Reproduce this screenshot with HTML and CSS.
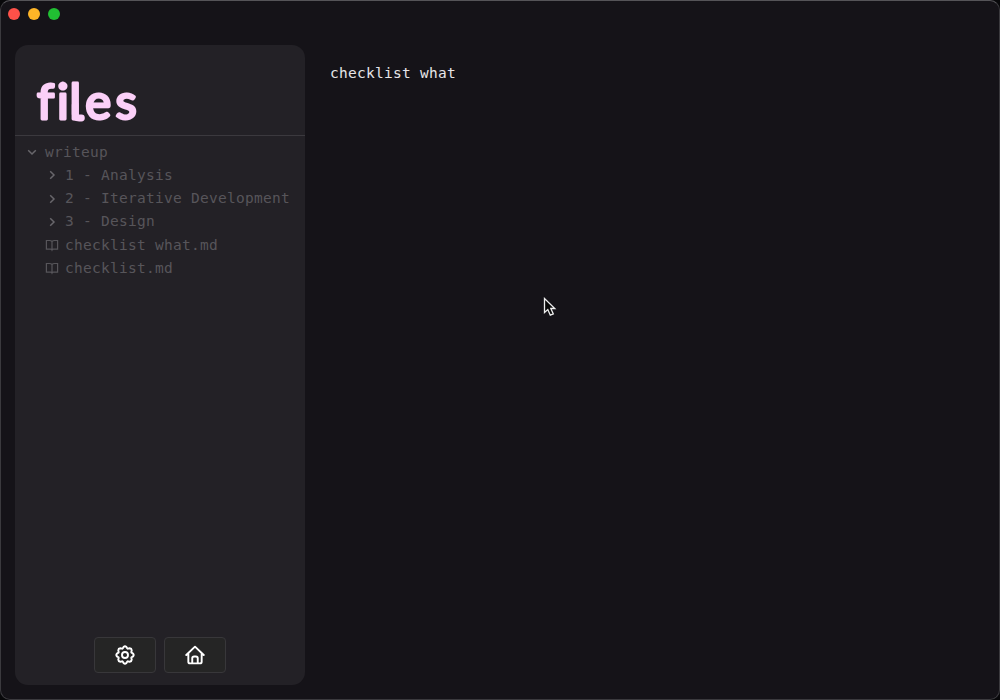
FILE: index.html
```html
<!DOCTYPE html>
<html lang="en">
<head>
<meta charset="utf-8">
<title>files</title>
<link rel="stylesheet" href="styles.css">
</head>
<body>
<div class="window">
  <header class="titlebar"><span class="dot red"></span><span class="dot yellow"></span><span class="dot green"></span></header>
  <div class="layout">
    <aside class="sidebar">
      <h1 class="title"><svg class="wordmark" viewBox="0 0 290 90"><text y="74.400" x="22 42.100 54.400 70.200 100.500">files</text><path class="tail" d="M60.200 60v9q0 4 4 4h2.200"/></svg></h1>
      <ul class="tree">
        <li class="row root"><svg class="icon" viewBox="0 0 14 14"><path d="M3.2 5.2 7 9l3.8-3.8"/></svg><span class="name">writeup</span></li>
        <li class="row"><svg class="icon" viewBox="0 0 14 14"><path d="M5.2 3.2 9 7l-3.800 3.800"/></svg><span class="name">1 - Analysis</span></li>
        <li class="row"><svg class="icon" viewBox="0 0 14 14"><path d="M5.2 3.2 9 7l-3.800 3.800"/></svg><span class="name">2 - Iterative Development</span></li>
        <li class="row"><svg class="icon" viewBox="0 0 14 14"><path d="M5.2 3.2 9 7l-3.800 3.800"/></svg><span class="name">3 - Design</span></li>
        <li class="row"><svg class="icon book" viewBox="0 0 14 14"><path d="M7 3.500Q6 2.500 4.500 2.500H1.400v8.700h4.200Q6.700 11.200 7 12q.3-.8 1.400-.8h4.200V2.500H9.500Q8 2.500 7 3.500V12"/></svg><span class="name">checklist what.md</span></li>
        <li class="row"><svg class="icon book" viewBox="0 0 14 14"><path d="M7 3.500Q6 2.500 4.500 2.500H1.400v8.700h4.200Q6.700 11.200 7 12q.3-.8 1.400-.8h4.200V2.500H9.500Q8 2.500 7 3.500V12"/></svg><span class="name">checklist.md</span></li>
      </ul>
      <div class="actions">
        <button class="button" aria-label="Settings"><svg viewBox="0 0 24 24"><circle cx="12" cy="12" r="3.600"/><path d="M10.300 2.300Q12 .9 13.700 2.300L14.800 4.100Q15.100 4.500 15.600 4.400L17.600 3.900Q19.900 4.100 20.100 6.400L19.600 8.400Q19.500 8.900 19.900 9.200L21.700 10.300Q23.100 12 21.700 13.700L19.900 14.800Q19.500 15.100 19.600 15.600L20.100 17.600Q19.900 19.900 17.600 20.100L15.600 19.600Q15.100 19.500 14.800 19.900L13.700 21.700Q12 23.100 10.300 21.700L9.200 19.900Q8.900 19.500 8.400 19.600L6.400 20.100Q4.100 19.900 3.900 17.600L4.400 15.600Q4.500 15.100 4.100 14.800L2.300 13.700Q.9 12 2.300 10.300L4.100 9.200Q4.500 8.900 4.400 8.400L3.900 6.400Q4.100 4.100 6.400 3.900L8.400 4.400Q8.900 4.500 9.200 4.100Z"/></svg></button>
        <button class="button" aria-label="Home"><svg viewBox="0 0 24 24"><path d="M1.500 12 12 2l10.500 10M4 10v10q0 2 2 2h12q2 0 2-2V10M8.700 22v-6q0-2.300 2.300-2.300h2q2.300 0 2.300 2.300v6"/></svg></button>
      </div>
    </aside>
    <main class="editor">checklist what</main>
  </div>
  <svg class="cursor" viewBox="0 0 14 20"><path d="M1.500 1.500v14l3.300-3 2.500 5.700 3-1.300-2.500-5.400h4z"/></svg>
</div>
</body>
</html>
```
FILE: styles.css
```css
* { box-sizing: border-box; }
body { margin: 0; background: #08080a; }
.window {
  position: relative;
  width: 1000px;
  height: 700px;
  border: 1px solid #3b3a3e;
  border-top-color: #555458;
  border-radius: 10px;
  background: #151318;
  overflow: hidden;
  font-family: "DejaVu Sans Mono", monospace;
  font-size: 14.500px;
  letter-spacing: 0.270px;
}
.titlebar { display: flex; gap: 8px; height: 44px; padding: 7px 7px 0; }
.dot { width: 12px; height: 12px; border-radius: 50%; }
.red { background: #ff5149; }
.yellow { background: #ffb527; }
.green { background: #21c033; }
.layout { display: flex; padding-left: 14px; }
.sidebar {
  display: flex;
  flex-direction: column;
  width: 290px;
  height: 640px;
  border-radius: 13px;
  background: #232126;
}
.title { height: 91px; margin: 0; border-bottom: 1px solid #3b393e; }
.wordmark {
  display: block;
  width: 290px;
  height: 90px;
  fill: #fbd0f8;
  stroke: #fbd0f8;
  stroke-width: 2.900;
  stroke-linejoin: round;
  stroke-linecap: round;
  font: 400 49px Lato, sans-serif;
  letter-spacing: 0;
}
.tail { fill: none; stroke-width: 6.800; }
.tree { list-style: none; margin: 0; padding: 5px 0 0; color: #57555a; }
.row { display: flex; align-items: center; gap: 6px; height: 23.250px; padding-left: 30px; white-space: pre; }
.root { padding-left: 10px; }
.name { padding-bottom: 2px; }
.icon { width: 14px; height: 14px; margin-bottom: 1px; fill: none; stroke: #68666b; stroke-width: 1.500; }
.book { stroke: #57555a; stroke-width: 1.200; }
.actions { display: flex; justify-content: center; gap: 8px; margin-top: auto; padding-bottom: 12px; }
.button {
  display: grid;
  place-items: center;
  width: 62px;
  height: 36px;
  padding: 0;
  border: 1px solid #38373a;
  border-radius: 4px;
  background: #252525;
}
.button svg { width: 20px; height: 20px; fill: none; stroke: #fff; stroke-width: 2.300; stroke-linejoin: round; stroke-linecap: round; }
.editor { padding: 18px 0 0 25px; color: #e6e5e7; line-height: 20px; }
.cursor { position: absolute; left: 542px; top: 296px; width: 14px; height: 20px; fill: #080808; stroke: #eee; stroke-width: 1.300; }
```
